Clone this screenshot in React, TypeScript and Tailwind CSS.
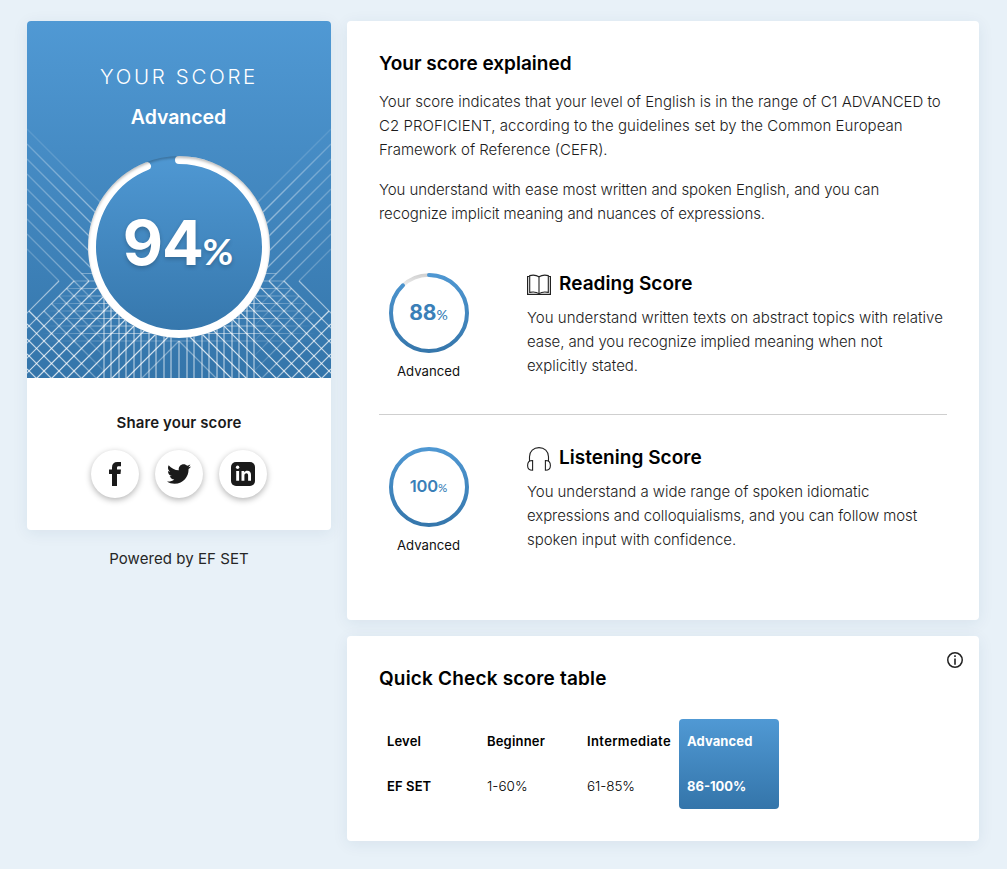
import React from "react";
import { FaTwitter } from "react-icons/fa";

const range = (n: number) => Array.from({ length: n }, (_, i) => i);

function HalfPattern() {
  return (
    <g fill="none" strokeWidth="1">
      <g stroke="url(#fadeUpper)" strokeWidth="1.3">
        {range(9).map((k) => {
          const c = 108 + 15 * k;
          return <line key={k} x1="0" y1={c} x2={260 - c} y2="260" opacity={k === 0 ? 0.45 : k === 8 ? 0.8 : 1} />;
        })}
      </g>
      <g stroke="url(#fadeSlash)" strokeWidth="1.2">
        {range(13).map((k) => {
          const s = 292 + 15 * k;
          const x1 = Math.min(s - 260, 152);
          return <line key={k} x1={x1} y1={s - x1} x2={s - 360} y2="360" opacity={k === 12 ? 0.5 : 1} />;
        })}
      </g>
      <g stroke="url(#fadeLattice)" strokeWidth="1.2">
        {range(10).map((k) => {
          const c = 213 + 15 * k;
          const x1 = k < 5 ? (307 - c) / 2 : k === 5 ? 2 : 0;
          const x2 = Math.min(360 - c, 78);
          return <line key={k} x1={x1} y1={c + x1} x2={x2} y2={c + x2} opacity={k < 5 ? 0.6 : 1} />;
        })}
      </g>
      <g stroke="url(#fadeRow)">
        {range(10).map((k) => {
          const y = 252.5 + 7.5 * k;
          return <path key={k} d={`M${Math.max(16, 307 - y)} ${y}H152`} opacity={k === 9 ? 0.5 : 1} />;
        })}
      </g>
      <g stroke="#fff">
        {range(10).map((k) => (
          <path key={k} d={`M${(k % 2 ? 76.5 : 77) + 7.5 * k} 275V357`} strokeWidth={k % 2 ? 1 : 2} opacity={k % 2 ? 0.75 : 0.36} />
        ))}
      </g>
    </g>
  );
}

function HeroPattern() {
  return (
    <svg className="absolute inset-0" width="304" height="357" viewBox="0 0 304 357">
      <defs>
        <linearGradient id="fadeUpper" gradientUnits="userSpaceOnUse" x1="0" y1="0" x2="75" y2="0">
          <stop offset="0" stopColor="#fff" stopOpacity="0.22" />
          <stop offset="1" stopColor="#fff" stopOpacity="0.46" />
        </linearGradient>
        <linearGradient id="fadeSlash" gradientUnits="userSpaceOnUse" x1="0" y1="260" x2="45" y2="310">
          <stop offset="0" stopColor="#fff" stopOpacity="0.4" />
          <stop offset="1" stopColor="#fff" stopOpacity="0.78" />
        </linearGradient>
        <linearGradient id="fadeLattice" gradientUnits="userSpaceOnUse" x1="0" y1="0" x2="80" y2="0">
          <stop offset="0" stopColor="#fff" stopOpacity="0.72" />
          <stop offset="0.6" stopColor="#fff" stopOpacity="0.65" />
          <stop offset="1" stopColor="#fff" stopOpacity="0.1" />
        </linearGradient>
        <linearGradient id="fadeRow" gradientUnits="userSpaceOnUse" x1="15" y1="0" x2="80" y2="0">
          <stop offset="0" stopColor="#fff" stopOpacity="0" />
          <stop offset="1" stopColor="#fff" stopOpacity="0.48" />
        </linearGradient>
        <linearGradient id="disc" x1="0" y1="0" x2="0" y2="1">
          <stop offset="0" stopColor="#4f98d3" />
          <stop offset="1" stopColor="#3576ab" />
        </linearGradient>
        <filter id="soft" x="-20%" y="-20%" width="140%" height="140%">
          <feGaussianBlur stdDeviation="1.6" />
        </filter>
        <clipPath id="discEdge">
          <circle cx="152" cy="226" r="91" />
        </clipPath>
      </defs>
      <HalfPattern />
      <g transform="translate(304 0) scale(-1 1)">
        <HalfPattern />
      </g>
      <path d="M152 320V357" stroke="#fff" strokeWidth="2" opacity="0.36" />
      <circle cx="152" cy="226" r="91" fill="url(#disc)" />
      <circle
        cx="152"
        cy="226"
        r="87"
        fill="none"
        stroke="#fff"
        strokeWidth="8"
        strokeLinecap="round"
        pathLength="100"
        strokeDasharray="94 100"
        transform="rotate(-90 152 226)"
      />
      <g clipPath="url(#discEdge)">
        <circle cx="152" cy="228" r="93" fill="none" stroke="#000" strokeOpacity="0.34" strokeWidth="3" filter="url(#soft)" />
      </g>
    </svg>
  );
}

function Dial({ value, small }: { value: number; small?: boolean }) {
  const id = `dial${value}`;
  return (
    <div className="relative h-20 w-20">
      <svg className="absolute inset-0" width="80" height="80" viewBox="0 0 80 80">
        <defs>
          <linearGradient id={id} gradientUnits="userSpaceOnUse" x1="80" y1="0" x2="0" y2="0">
            <stop offset="0" stopColor="#4f98d3" />
            <stop offset="1" stopColor="#3576ab" />
          </linearGradient>
          <linearGradient id={`${id}track`} x1="0" y1="0" x2="0" y2="1">
            <stop offset="0" stopColor="#d2d2d2" />
            <stop offset="0.15" stopColor="#efefef" />
          </linearGradient>
        </defs>
        {value < 100 && <circle cx="40" cy="40" r="38" fill="none" stroke={`url(#${id}track)`} strokeWidth="3.6" />}
        <circle
          cx="40"
          cy="40"
          r="38"
          fill="none"
          stroke={`url(#${id})`}
          strokeWidth="4"
          strokeLinecap="round"
          pathLength="100"
          strokeDasharray={`${value} 100`}
          transform="rotate(-90 40 40)"
        />
      </svg>
      <div className="flex h-20 items-baseline justify-center pr-px text-[#3a7fb8]">
        {small ? (
          <span className="text-[16.5px] leading-[78px] font-semibold tracking-[-0.1px]">{value}</span>
        ) : (
          <span className="text-[21px] leading-20 font-bold">{value}</span>
        )}
        <span className={small ? "font-['Lato'] text-[11.5px] font-medium" : "font-['Lato'] text-[14px] font-medium"}>%</span>
      </div>
    </div>
  );
}

function BookIcon() {
  return (
    <svg width="24" height="24" viewBox="0 0 24 24" fill="none" stroke="#222">
      <path d="M2.5 3.5H.6V21.4H23.4V3.5H21.5" strokeWidth="1.2" />
      <path d="M12 3.8C9.5 2.2 5.5 1.9 2.7 2.6V19.4C5.5 18.8 9.5 19 12 20.6C14.5 19 18.5 18.8 21.3 19.4V2.6C18.5 1.9 14.5 2.2 12 3.8Z" strokeWidth="1.1" />
      <path d="M12 3.8V20.6" strokeWidth="1.1" />
    </svg>
  );
}

function HeadphonesIcon() {
  return (
    <svg width="24" height="24" viewBox="0 0 24 24" fill="none" stroke="#222" strokeWidth="1.1">
      <path d="M2.5 14V9.8C2.5 4.4 6.6.6 12 .6S21.5 4.4 21.5 9.8V14" />
      <path d="M5.6 13.5V23.3C2.6 23.3.6 21.2.6 18.4S2.6 13.5 5.6 13.5Z" />
      <path d="M18.4 13.5V23.3C21.4 23.3 23.4 21.2 23.4 18.4S21.4 13.5 18.4 13.5Z" />
    </svg>
  );
}

type Line = [string, string];

function Lines({ lines }: { lines: Line[] }) {
  return (
    <p className="text-[15px] leading-6 font-light text-[#1c1c1c]">
      {lines.map(([text, tracking]) => (
        <span key={text} className={`block whitespace-nowrap ${tracking}`}>
          {text}
        </span>
      ))}
    </p>
  );
}

function SkillRow({ value, small, icon, title, lines }: { value: number; small?: boolean; icon: React.ReactNode; title: string; lines: Line[] }) {
  return (
    <div className="flex">
      <div className="flex w-[100px] flex-col items-center pt-[2px]">
        <Dial value={value} small={small} />
        <span className="mt-2 pr-px text-[13.2px] leading-5 text-[#111]">Advanced</span>
      </div>
      <div className="ml-12">
        <div className="flex gap-2">
          <span className="mt-[2px] h-6 w-6">{icon}</span>
          <h3 className="text-[19px] leading-[26px] font-semibold tracking-[0.04px] text-black">{title}</h3>
        </div>
        <div className="mt-[9px]">
          <Lines lines={lines} />
        </div>
      </div>
    </div>
  );
}

function ShareButton({ children }: { children: React.ReactNode }) {
  return (
    <button className="flex h-12 w-12 items-center justify-center rounded-full bg-white text-[#1a1a1a] shadow-[0_2px_6px_rgba(0,0,0,0.3)]">
      {children}
    </button>
  );
}

export default function App() {
  return (
    <div className="flex h-[869px] w-[1007px] items-start gap-4 overflow-hidden bg-[#e8f1f8] pt-[21px] pl-[27px] font-['Inter',sans-serif]">
      <aside className="w-[304px]">
        <section className="overflow-hidden rounded-[4px] bg-white shadow-[0_3px_16px_rgba(30,60,100,0.08)]">
          <div className="relative h-[357px] bg-linear-to-b from-[#5099d4] to-[#3475aa]">
            <HeroPattern />
            <div className="relative flex flex-col items-center pt-10 text-white">
              <h2 className="text-[20.5px] leading-8 font-light tracking-[2.7px]">YOUR SCORE</h2>
              <p className="mt-[12px] pr-px text-[19.5px] leading-6 font-semibold tracking-[-0.05px]">Advanced</p>
              <div className="mt-[78px] flex items-baseline pr-[2px] leading-[72px] [text-shadow:0_2px_4px_rgba(0,0,0,0.22)]">
                <span className="text-[62px] font-bold tracking-[-1.1px]">94</span>
                <span className="font-['Lato'] text-[37px] font-bold">%</span>
              </div>
            </div>
          </div>
          <div className="flex flex-col items-center py-8">
            <h3 className="text-[15px] leading-[26px] font-semibold tracking-[0.12px] text-[#1a1a1a]">Share your score</h3>
            <div className="mt-[14px] flex gap-4">
              <ShareButton>
                <svg width="24" height="24" viewBox="0 0 24 24" fill="currentColor">
                  <path d="M9 24V12H6V7.6H9V5.5C9 1.9 10.9 0 14.3 0H18V4.2H15.6C14.4 4.2 14 4.8 14 5.9V7.6H18L17.5 12H14V24Z" />
                </svg>
              </ShareButton>
              <ShareButton>
                <FaTwitter size={24} />
              </ShareButton>
              <ShareButton>
                <svg width="24" height="24" viewBox="0 0 24 24">
                  <rect width="24" height="24" rx="5" fill="currentColor" />
                  <circle cx="6.6" cy="5.3" r="1.7" fill="#fff" />
                  <path fill="#fff" d="M5.2 9H8.1V18.7H5.2ZM10.5 9H13.2V10.4C13.8 9.4 14.9 8.7 16.3 8.7C19 8.7 20 10.4 20 13.1V18.7H17.1V13.6C17.1 12.2 16.7 11.3 15.5 11.3C14.1 11.3 13.4 12.2 13.4 13.6V18.7H10.5Z" />
                </svg>
              </ShareButton>
            </div>
          </div>
        </section>
        <p className="mt-[17px] text-center text-[15px] leading-6 tracking-[0.06px] text-[#262626]">Powered by EF SET</p>
      </aside>

      <main className="flex w-[632px] flex-col gap-4">
        <section className="h-[599px] rounded-[4px] bg-white p-8 shadow-[0_3px_16px_rgba(30,60,100,0.08)]">
          <h2 className="text-[19px] leading-[22px] font-semibold text-black">Your score explained</h2>
          <div className="mt-[15px] flex flex-col gap-4">
            <Lines
              lines={[
                ["Your score indicates that your level of English is in the range of C1 ADVANCED to", "tracking-normal"],
                ["C2 PROFICIENT, according to the guidelines set by the Common European", "tracking-[0.05px]"],
                ["Framework of Reference (CEFR).", "tracking-normal"],
              ]}
            />
            <Lines
              lines={[
                ["You understand with ease most written and spoken English, and you can", "tracking-[-0.07px]"],
                ["recognize implicit meaning and nuances of expressions.", "tracking-[-0.1px]"],
              ]}
            />
          </div>
          <div className="mt-[45px] border-b border-[#cfcfcf] pb-[33px]">
            <SkillRow
              value={88}
              icon={<BookIcon />}
              title="Reading Score"
              lines={[
                ["You understand written texts on abstract topics with relative", "tracking-[0.02px]"],
                ["ease, and you recognize implied meaning when not", "tracking-[-0.09px]"],
                ["explicitly stated.", "tracking-[-0.04px]"],
              ]}
            />
          </div>
          <div className="pt-[30px]">
            <SkillRow
              value={100}
              small
              icon={<HeadphonesIcon />}
              title="Listening Score"
              lines={[
                ["You understand a wide range of spoken idiomatic", "tracking-[-0.05px]"],
                ["expressions and colloquialisms, and you can follow most", "tracking-[-0.09px]"],
                ["spoken input with confidence.", "tracking-[-0.02px]"],
              ]}
            />
          </div>
        </section>

        <section className="relative h-[205px] rounded-[4px] bg-white p-8 shadow-[0_3px_16px_rgba(30,60,100,0.08)]">
          <svg className="absolute top-4 right-4" width="16" height="16" viewBox="0 0 16 16" fill="none" stroke="#222">
            <circle cx="8" cy="8" r="7.25" strokeWidth="1.5" />
            <path d="M8 6.5V12.7M8 3.3V5" strokeWidth="1.6" />
          </svg>
          <h2 className="text-[19px] leading-[22px] font-semibold tracking-[0.18px] text-black">Quick Check score table</h2>
          <div className="mt-[29px] grid w-[400px] grid-cols-4 text-[13px] leading-[45px] whitespace-nowrap text-black">
            <div className="pl-2 font-semibold">
              <p className="tracking-[0.15px]">Level</p>
              <p className="tracking-[0.1px]">EF SET</p>
            </div>
            <div className="pl-2">
              <p className="font-semibold tracking-[0.18px]">Beginner</p>
              <p className="text-[13.5px] font-light">1-60%</p>
            </div>
            <div className="pl-2">
              <p className="font-semibold tracking-[0.37px]">Intermediate</p>
              <p className="text-[13.5px] font-light tracking-[-0.1px]">61-85%</p>
            </div>
            <div className="rounded-[4px] bg-linear-to-b from-[#5099d4] to-[#3475aa] pl-2 font-bold text-white">
              <p className="tracking-[0.1px]">Advanced</p>
              <p>86-100%</p>
            </div>
          </div>
        </section>
      </main>
    </div>
  );
}
